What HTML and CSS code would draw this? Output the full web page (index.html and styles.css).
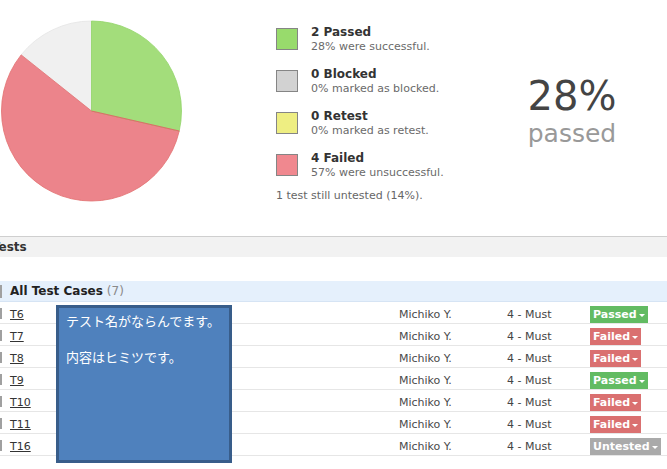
FILE: index.html
```html
<!DOCTYPE html>
<html>

<head>
  <meta charset="utf-8">
  <link rel="stylesheet" href="styles.css">
</head>

<body>
  <div class="summary">
    <svg class="pie" width="184" height="204" viewBox="0 0 184 204">
      <path d="M91.5,111 L21.14,54.89 A90,90 0 0 1 91.5,21 Z" fill="#f0f0f0" stroke="#e4e4e4" stroke-width="0.8"/>
      <path d="M91.5,111 L179.24,131.03 A90,90 0 1 1 21.14,54.89 Z" fill="#ec848b" stroke="#e27070" stroke-width="0.8"/>
      <path d="M91.5,111 L91.5,21 A90,90 0 0 1 179.24,131.03 Z" fill="#a3dd7b" stroke="#92d468" stroke-width="0.8"/>
      <path d="M91.5,111 L179.24,131.03" stroke="#e06a6a" stroke-width="1"/>
    </svg>

    <div class="legend">
      <div class="legend-item">
        <div class="swatch passed"></div>
        <div>
          <div class="legend-title">2 Passed</div>
          <div class="legend-sub">28% were successful.</div>
        </div>
      </div>
      <div class="legend-item">
        <div class="swatch blocked"></div>
        <div>
          <div class="legend-title">0 Blocked</div>
          <div class="legend-sub">0% marked as blocked.</div>
        </div>
      </div>
      <div class="legend-item">
        <div class="swatch retest"></div>
        <div>
          <div class="legend-title">0 Retest</div>
          <div class="legend-sub">0% marked as retest.</div>
        </div>
      </div>
      <div class="legend-item">
        <div class="swatch failed"></div>
        <div>
          <div class="legend-title">4 Failed</div>
          <div class="legend-sub">57% were unsuccessful.</div>
        </div>
      </div>
      <div class="legend-note">1 test still untested (14%).</div>
    </div>

    <div class="rate">
      <div class="rate-value">28%</div>
      <div class="rate-label">passed</div>
    </div>
  </div>

  <div class="section-header"><span>Tests</span></div>

  <div class="tests">
    <div class="group-header">
      <span class="mark"></span>
      <span class="group-title">All Test Cases</span>
      <span class="group-count">(7)</span>
    </div>

    <div class="row">
      <span class="mark"></span>
      <span class="col-id"><a href="#">T6</a></span>
      <span class="col-name">Michiko Y.</span>
      <span class="col-prio">4 - Must</span>
      <span class="col-status"><span class="badge passed">Passed<i class="caret"></i></span></span>
    </div>
    <div class="row">
      <span class="mark"></span>
      <span class="col-id"><a href="#">T7</a></span>
      <span class="col-name">Michiko Y.</span>
      <span class="col-prio">4 - Must</span>
      <span class="col-status"><span class="badge failed">Failed<i class="caret"></i></span></span>
    </div>
    <div class="row">
      <span class="mark"></span>
      <span class="col-id"><a href="#">T8</a></span>
      <span class="col-name">Michiko Y.</span>
      <span class="col-prio">4 - Must</span>
      <span class="col-status"><span class="badge failed">Failed<i class="caret"></i></span></span>
    </div>
    <div class="row">
      <span class="mark"></span>
      <span class="col-id"><a href="#">T9</a></span>
      <span class="col-name">Michiko Y.</span>
      <span class="col-prio">4 - Must</span>
      <span class="col-status"><span class="badge passed">Passed<i class="caret"></i></span></span>
    </div>
    <div class="row">
      <span class="mark"></span>
      <span class="col-id"><a href="#">T10</a></span>
      <span class="col-name">Michiko Y.</span>
      <span class="col-prio">4 - Must</span>
      <span class="col-status"><span class="badge failed">Failed<i class="caret"></i></span></span>
    </div>
    <div class="row">
      <span class="mark"></span>
      <span class="col-id"><a href="#">T11</a></span>
      <span class="col-name">Michiko Y.</span>
      <span class="col-prio">4 - Must</span>
      <span class="col-status"><span class="badge failed">Failed<i class="caret"></i></span></span>
    </div>
    <div class="row">
      <span class="mark"></span>
      <span class="col-id"><a href="#">T16</a></span>
      <span class="col-name">Michiko Y.</span>
      <span class="col-prio">4 - Must</span>
      <span class="col-status"><span class="badge untested">Untested<i class="caret"></i></span></span>
    </div>

    <div class="tooltip">テスト名がならんでます。<br><br>内容はヒミツです。</div>
  </div>
</body>

</html>
```

FILE: styles.css
```css
* {
  margin: 0;
  padding: 0;
  box-sizing: border-box;
}

html,
body {
  width: 667px;
  height: 469px;
  overflow: hidden;
}

body {
  background: #fff;
  color: #333;
  font-family: "DejaVu Sans", Verdana, sans-serif;
  font-size: 11px;
}

.summary {
  display: flex;
  height: 236px;
}

.pie {
  display: block;
  flex-shrink: 0;
}

.legend {
  width: 236px;
  margin-left: 92px;
  padding-top: 25px;
}

.legend-item {
  display: flex;
  margin-bottom: 13px;
}

.swatch {
  width: 22px;
  height: 22px;
  margin-top: 3px;
  margin-right: 13px;
  border: 1px solid #858585;
  flex-shrink: 0;
}

.swatch.passed {
  background: #98db6c;
}

.swatch.blocked {
  background: #d2d2d2;
}

.swatch.retest {
  background: #eeee82;
}

.swatch.failed {
  background: #f0888f;
}

.legend-title {
  font-size: 12px;
  font-weight: bold;
  line-height: 15px;
  color: #333;
}

.legend-sub {
  font-size: 11px;
  line-height: 14px;
  color: #6a6a6a;
}

.legend-note {
  margin-top: -4px;
  font-size: 11px;
  line-height: 14px;
  color: #666;
}

.rate {
  width: 120px;
  padding-top: 73px;
  text-align: center;
}

.rate-value {
  font-size: 40px;
  line-height: 46px;
  color: #444;
}

.rate-label {
  font-size: 25px;
  line-height: 30px;
  color: #999;
}

.section-header {
  height: 21px;
  border-top: 1px solid #cfcfcf;
  background: #f2f2f2;
  font-size: 12px;
  font-weight: bold;
  line-height: 20px;
  overflow: hidden;
  white-space: nowrap;
}

.section-header span {
  display: inline-block;
  margin-left: -8px;
}

.tests {
  position: relative;
  margin-top: 24px;
}

.group-header {
  display: flex;
  align-items: flex-start;
  height: 21px;
  background: #e5f0fc;
  border-bottom: 1px solid #d6e4f4;
  font-size: 12px;
  line-height: 20px;
}

.group-header .mark {
  height: 13px;
  margin-top: 4px;
}

.mark {
  width: 2px;
  margin-right: 8px;
  background: #a0a0a0;
  flex-shrink: 0;
}

.group-title {
  font-weight: bold;
  color: #222;
}

.group-count {
  margin-left: 4px;
  color: #8a8a8a;
}

.row {
  display: flex;
  align-items: flex-start;
  height: 22px;
  padding-top: 4px;
  border-bottom: 1px solid #e6e6e6;
  line-height: 17px;
  white-space: nowrap;
}

.row .mark {
  height: 11px;
  margin-top: 2px;
}

.col-id {
  width: 389px;
}

.col-id a {
  color: #333;
  text-decoration: underline;
}

.col-name {
  width: 108px;
  color: #4a4a4a;
}

.col-prio {
  width: 83px;
  color: #444;
}

.badge {
  display: inline-flex;
  align-items: center;
  height: 17px;
  margin-top: -1px;
  padding: 0 3px;
  color: #fff;
  font-weight: bold;
  line-height: 17px;
}

.badge.passed {
  background: #62bb62;
}

.badge.failed {
  background: #da7070;
}

.badge.untested {
  background: #aaaaaa;
}

.caret {
  display: inline-block;
  width: 0;
  height: 0;
  margin-left: 2px;
  margin-top: 1px;
  border-left: 3px solid transparent;
  border-right: 3px solid transparent;
  border-top: 3px solid #fff;
}

.tooltip {
  position: absolute;
  left: 56px;
  top: 24px;
  width: 176px;
  height: 158px;
  padding: 4px 7px;
  background: #4f81bd;
  border: 3px solid #385d8a;
  color: #fff;
  font-family: "Noto Sans CJK JP", sans-serif;
  font-size: 13px;
  line-height: 18px;
  white-space: nowrap;
}
```
